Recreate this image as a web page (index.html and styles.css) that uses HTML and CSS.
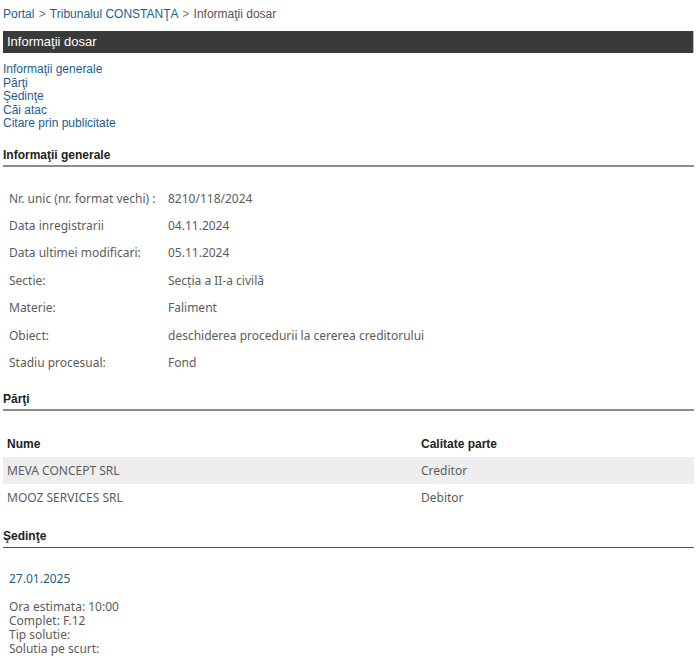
FILE: index.html
```html
<!DOCTYPE html>
<html lang="ro">
<head>
    <meta charset="UTF-8">
    <meta name="viewport" content="width=device-width, initial-scale=1.0">
    <title>Informaţii dosar</title>
    <link rel="stylesheet" href="styles.css">
</head>
<body>

<div class="breadcrumb">
    <a href="#">Portal</a> <span class="sep">&gt;</span> <a href="#">Tribunalul CONSTANŢA</a> <span class="sep">&gt;</span> <span class="current">Informaţii dosar</span>
</div>

<div class="title-bar">Informaţii dosar</div>

<ul class="nav">
    <li><a href="#generale">Informaţii generale</a></li>
    <li><a href="#parti">Părţi</a></li>
    <li><a href="#sedinte">Şedinţe</a></li>
    <li><a href="#cai">Căi atac</a></li>
    <li><a href="#citare">Citare prin publicitate</a></li>
</ul>

<h3 class="section" id="generale">Informaţii generale</h3>
<table class="info">
    <tr><td class="label">Nr. unic (nr. format vechi) :</td><td>8210/118/2024</td></tr>
    <tr><td class="label">Data inregistrarii</td><td>04.11.2024</td></tr>
    <tr><td class="label">Data ultimei modificari:</td><td>05.11.2024</td></tr>
    <tr><td class="label">Sectie:</td><td>Secția a II-a civilă</td></tr>
    <tr><td class="label">Materie:</td><td>Faliment</td></tr>
    <tr><td class="label">Obiect:</td><td>deschiderea procedurii la cererea creditorului</td></tr>
    <tr><td class="label">Stadiu procesual:</td><td>Fond</td></tr>
</table>

<h3 class="section" id="parti">Părţi</h3>
<table class="parti">
    <tr><th class="col-name">Nume</th><th>Calitate parte</th></tr>
    <tr class="odd"><td>MEVA CONCEPT SRL</td><td>Creditor</td></tr>
    <tr><td>MOOZ SERVICES SRL</td><td>Debitor</td></tr>
</table>

<h3 class="section dark" id="sedinte">Şedinţe</h3>
<div class="sedinta">
    <div class="data">27.01.2025</div>
    <div class="detalii">
        Ora estimata: 10:00<br>
        Complet: F.12<br>
        Tip solutie:<br>
        Solutia pe scurt:
    </div>
</div>

</body>
</html>
```

FILE: styles.css
```css
body {
    font-family: "Liberation Sans", Arial, sans-serif;
    font-size: 12px;
    margin: 0;
    padding: 0 6px 0 3px;
    color: #333;
    background-color: #fff;
}
a {
    color: #1d5e8e;
    text-decoration: none;
}
.breadcrumb {
    padding-top: 7px;
    height: 17px;
    line-height: 15px;
    color: #555;
}
.breadcrumb .sep {
    color: #777;
    margin: 0 1px;
}
.title-bar {
    margin-top: 7px;
    height: 22px;
    line-height: 22px;
    background-color: #3a3a3a;
    color: #fff;
    font-size: 13px;
    padding-left: 4px;
    border-right: 1px solid #bbb;
}
.nav {
    list-style: none;
    margin: 10px 0 0 0;
    padding: 0;
    line-height: 13.5px;
}
.section {
    font-size: 12px;
    font-weight: bold;
    color: #222;
    margin: 17px 0 0 0;
    padding-bottom: 2px;
    border-bottom: 2px solid #8c8c8c;
    line-height: 15px;
}
#parti {
    margin-top: 18px;
}
.section.dark {
    border-bottom: 1px solid #555;
    margin-top: 18px;
    padding-bottom: 3px;
}
.info, .parti {
    border-collapse: collapse;
    font-family: "Noto Sans", Tahoma, sans-serif;
    font-size: 12px;
    color: #5c5c5c;
}
.info {
    margin-top: 18px;
    margin-bottom: -2px;
}
.info td {
    height: 27.4px;
    padding: 0 0 0 6px;
    vertical-align: middle;
}
.info td.label {
    width: 153px;
}
.parti {
    width: 100%;
    margin-top: 19px;
}
.parti th {
    font-family: "Liberation Sans", Arial, sans-serif;
    text-align: left;
    font-size: 12px;
    color: #222;
    height: 27px;
    padding: 0 0 0 4px;
}
.parti th.col-name {
    width: 410px;
}
.parti td {
    height: 27px;
    padding: 0 0 0 4px;
}
.parti tr.odd {
    background-color: #eee;
}
.sedinta {
    font-family: "Noto Sans", Tahoma, sans-serif;
    font-size: 12px;
    color: #5c5c5c;
    padding-left: 6px;
}
.sedinta .data {
    color: #1d5e8e;
    font-size: 12px;
    margin-top: 22px;
    line-height: 18px;
}
.sedinta .detalii {
    margin-top: 12px;
    line-height: 14px;
}
```
